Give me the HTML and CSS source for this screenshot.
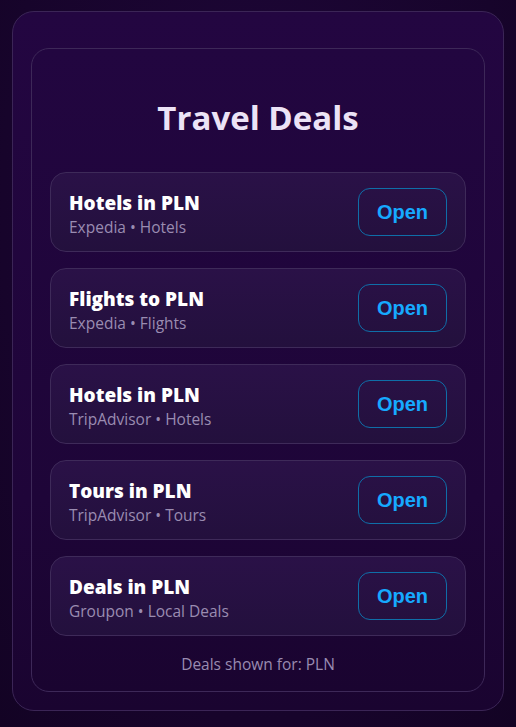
FILE: index.html
```html
<!DOCTYPE html>
<html lang="en">
<head>
<meta charset="utf-8">
<title>Travel Deals</title>
<link rel="stylesheet" href="styles.css">
</head>
<body>
<div class="shell">
  <div class="panel">
    <h1 class="title">Travel Deals</h1>
    <ul class="deals">
      <li class="deal">
        <div class="deal-text">
          <div class="deal-name">Hotels in PLN</div>
          <div class="deal-meta">Expedia • Hotels</div>
        </div>
        <a class="open-btn" href="#">Open</a>
      </li>
      <li class="deal">
        <div class="deal-text">
          <div class="deal-name">Flights to PLN</div>
          <div class="deal-meta">Expedia • Flights</div>
        </div>
        <a class="open-btn" href="#">Open</a>
      </li>
      <li class="deal">
        <div class="deal-text">
          <div class="deal-name">Hotels in PLN</div>
          <div class="deal-meta">TripAdvisor • Hotels</div>
        </div>
        <a class="open-btn" href="#">Open</a>
      </li>
      <li class="deal">
        <div class="deal-text">
          <div class="deal-name">Tours in PLN</div>
          <div class="deal-meta">TripAdvisor • Tours</div>
        </div>
        <a class="open-btn" href="#">Open</a>
      </li>
      <li class="deal">
        <div class="deal-text">
          <div class="deal-name">Deals in PLN</div>
          <div class="deal-meta">Groupon • Local Deals</div>
        </div>
        <a class="open-btn" href="#">Open</a>
      </li>
    </ul>
    <p class="footer">Deals shown for: PLN</p>
  </div>
</div>
</body>
</html>
```

FILE: styles.css
```css
* { box-sizing: border-box; }
html, body {
  margin: 0;
  height: 100%;
}
body {
  background: radial-gradient(ellipse at 50% 30%, #1e0638 0%, #17042b 70%, #130324 100%);
  font-family: "Open Sans", "Noto Sans", sans-serif;
  padding-top: 11px;
}
.shell {
  width: 492px;
  margin: 0 auto;
  padding: 36px 18px 18px;
  border: 1px solid #3b2556;
  border-radius: 22px;
  background: linear-gradient(180deg, #230641 0%, #1f0539 70%, #1a0430 100%);
}
.panel {
  border: 1px solid #3d2858;
  border-radius: 18px;
  padding: 49px 18px 17px;
  background: linear-gradient(180deg, #220640 0%, #1e0538 70%, #1a0430 100%);
}
.title {
  margin: 0 0 34px;
  text-align: center;
  font-size: 33px;
  font-weight: 700;
  line-height: 40px;
  color: #ece3f6;
}
.deals {
  list-style: none;
  margin: 0;
  padding: 0;
  display: flex;
  flex-direction: column;
  gap: 16px;
}
.deal {
  display: flex;
  align-items: center;
  justify-content: space-between;
  padding: 15px 18px;
  border: 1px solid #3e2a59;
  border-radius: 16px;
  background: linear-gradient(180deg, #2a1147 0%, #23103d 100%);
}
.deal-text {
  display: flex;
  flex-direction: column;
}
.deal-name {
  font-size: 19px;
  font-weight: 800;
  line-height: 30px;
  color: #ffffff;
}
.deal-meta {
  font-size: 15.5px;
  line-height: 18px;
  color: #9a8cb1;
}
.open-btn {
  display: block;
  padding: 11px 18px;
  border: 1px solid #0f6ea8;
  border-radius: 12px;
  font-family: "Liberation Sans", Arial, sans-serif;
  font-weight: 700;
  font-size: 20px;
  line-height: 24px;
  color: #16a9ff;
  text-decoration: none;
  background: transparent;
}
.footer {
  margin: 18px 0 0;
  text-align: center;
  font-size: 15.5px;
  line-height: 20px;
  color: #998bb0;
}
```
